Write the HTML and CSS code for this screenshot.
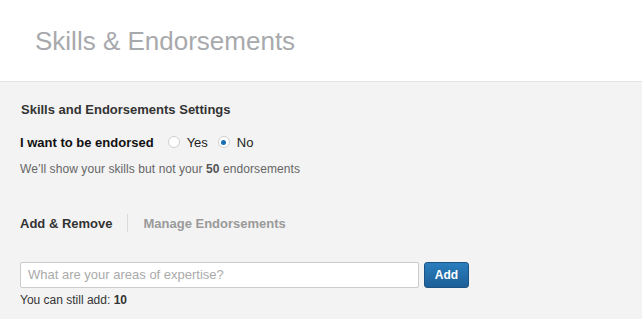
FILE: index.html
```html
<!DOCTYPE html>
<html>
<head>
<meta charset="utf-8">
<link rel="stylesheet" href="styles.css">
</head>
<body>
<header class="top">
  <h1 class="title">Skills &amp; Endorsements</h1>
</header>
<main class="content">
  <h2 class="settings-title">Skills and Endorsements Settings</h2>
  <div class="endorse-row">
    <span class="endorse-label">I want to be endorsed</span>
    <label class="radio"><span class="circle"></span>Yes</label>
    <label class="radio"><span class="circle checked"></span>No</label>
  </div>
  <p class="note">We’ll show your skills but not your <b>50</b> endorsements</p>
  <nav class="tabs">
    <span class="tab active">Add &amp; Remove</span>
    <span class="sep"></span>
    <span class="tab">Manage Endorsements</span>
  </nav>
  <div class="add-row">
    <div class="input">What are your areas of expertise?</div>
    <button class="btn">Add</button>
  </div>
  <p class="remaining">You can still add: <b>10</b></p>
  <div class="panel"></div>
</main>
</body>
</html>
```
FILE: styles.css
```css
* { box-sizing: border-box; }
html, body { margin: 0; padding: 0; }
body {
  background: #f3f3f3;
  font-family: "Liberation Sans", Arial, sans-serif;
  color: #333;
  overflow: hidden;
  height: 319px;
}
.top {
  background: #fff;
  height: 82px;
  border-bottom: 1px solid #e3e3e3;
  padding: 25px 0 0 35px;
}
.title {
  margin: 0;
  font-weight: normal;
  font-size: 26px;
  line-height: 32px;
  color: #a8a9ac;
}
.content {
  padding: 19px 21px 0 20px;
}
.settings-title {
  margin: 0 0 0 1px;
  font-size: 13px;
  line-height: 18px;
  font-weight: bold;
  color: #333;
}
.endorse-row {
  display: flex;
  align-items: center;
  margin-top: 15px;
  height: 16px;
  font-size: 13px;
}
.endorse-label {
  font-weight: bold;
  color: #111;
  margin-right: 14px;
}
.radio {
  display: flex;
  align-items: center;
  color: #222;
  margin-right: 10px;
}
.circle {
  width: 12px;
  height: 12px;
  border-radius: 50%;
  border: 1px solid #d0d0d0;
  background: #fff;
  margin-right: 7px;
  position: relative;
}
.circle.checked::after {
  content: "";
  position: absolute;
  left: 2.5px;
  top: 2.5px;
  width: 5px;
  height: 5px;
  border-radius: 50%;
  background: #1a6fb2;
}
.note {
  margin: 11px 0 0 0;
  font-size: 12px;
  line-height: 16px;
  color: #666;
  letter-spacing: 0.08px;
}
.note b { color: #555; }
.tabs {
  display: flex;
  align-items: center;
  margin-top: 37px;
  height: 18px;
  font-size: 13px;
  font-weight: bold;
}
.tab { color: #9a9a9a; }
.tab.active { color: #333; }
.sep {
  width: 1px;
  height: 18px;
  background: #dadada;
  margin: 0 15px 0 15px;
}
.add-row {
  display: flex;
  margin-top: 30px;
  height: 26px;
}
.input {
  width: 399px;
  height: 26px;
  border: 1px solid #cbcbcb;
  border-radius: 2px;
  background: #fff;
  color: #aaa;
  font-size: 13px;
  line-height: 24px;
  padding-left: 7px;
}
.btn {
  margin-left: 5px;
  width: 45px;
  height: 26px;
  border: 1px solid #1b5384;
  border-radius: 3px;
  background: linear-gradient(#2a7dbd, #1d5f98);
  color: #fff;
  font-family: "Liberation Sans", Arial, sans-serif;
  font-weight: bold;
  font-size: 12px;
  padding: 0;
}
.remaining {
  margin: 5px 0 0 0;
  font-size: 12px;
  line-height: 15px;
  color: #333;
}
.panel {
  margin-top: 12px;
  background: #fff;
  height: 2px;
  width: 601px;
}
```
